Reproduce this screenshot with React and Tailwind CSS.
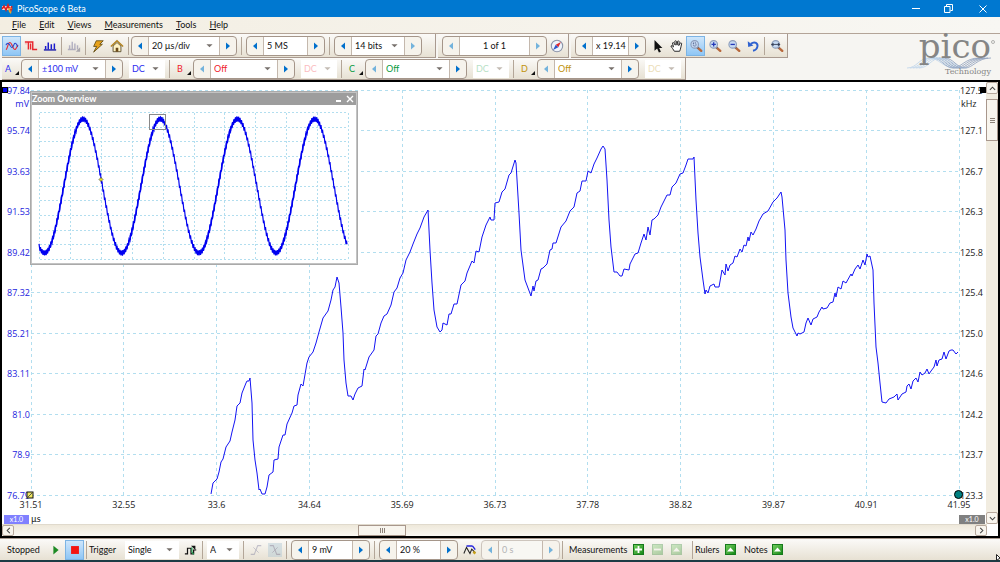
import React, { useState } from 'react';
import clsx from 'clsx';

const MENUS = ['File', 'Edit', 'Views', 'Measurements', 'Tools', 'Help'];

const VOLTS = ['97.84', '95.74', '93.63', '91.53', '89.42', '87.32', '85.21', '83.11', '81.0', '78.9', '76.79'];
const FREQS = ['127.5', '127.1', '126.7', '126.3', '125.8', '125.4', '125.0', '124.6', '124.2', '123.7', '123.3'];
const TIMES = ['31.51', '32.55', '33.6', '34.64', '35.69', '36.73', '37.78', '38.82', '39.87', '40.91', '41.95'];

const CHANNELS = [
    { name: 'A', range: '±100 mV', on: true, color: 'text-[#2b2bf0]' },
    { name: 'B', range: 'Off', on: false, color: 'text-[#f0202c]' },
    { name: 'C', range: 'Off', on: false, color: 'text-[#089a40]' },
    { name: 'D', range: 'Off', on: false, color: 'text-[#c0920c]' },
];

// Captured samples of channel A, in the units of the graph's view box
const TRACE =
    '211,494 213,483 217,479 219,472 221,462 223,459 226,447 230,441 232,432 235,420 237,406 240,403 242,393 246,383 247,381 249,381 250,378 ' +
    '252,403 253,440 255,460 257,473 259,490 260,489 262,494 265,494 267,487 269,475 273,472 274,460 278,459 279,447 283,435 285,435 287,424 ' +
    '292,413 294,406 297,405 298,395 301,384 303,386 307,363 309,357 313,352 316,343 319,332 323,318 328,311 331,300 333,290 335,287 337,277 ' +
    '339,283 341,307 343,333 344,360 346,383 348,396 351,396 353,400 355,394 358,388 362,386 364,369 365,370 369,357 374,350 376,336 378,334 ' +
    '381,323 384,316 387,314 391,305 394,292 397,288 400,278 403,273 406,260 410,252 413,244 417,234 420,228 424,217 428,210 ' +
    '430,250 432,283 434,310 437,327 440,332 442,330 443,323 447,325 449,314 451,314 454,304 457,304 461,285 465,281 467,273 472,261 474,263 ' +
    '476,251 479,252 482,237 486,225 490,217 491,220 494,220 495,203 499,202 502,192 505,189 509,175 511,173 515,160 516,163 ' +
    '519,213 521,250 525,280 528,288 531,296 533,286 534,291 536,281 538,280 541,269 543,268 547,264 550,250 552,249 553,243 556,243 561,227 ' +
    '566,221 570,211 574,207 577,193 580,191 582,181 586,181 588,171 591,173 594,164 597,158 601,149 603,146 605,149 ' +
    '607,180 609,220 611,247 614,272 617,272 620,276 622,276 624,269 629,270 630,264 635,254 638,253 641,243 644,234 646,240 648,227 650,235 ' +
    '652,220 654,219 658,215 661,207 667,195 670,195 672,187 676,183 680,174 683,173 686,165 688,159 693,159 694,157 ' +
    '696,200 698,233 700,257 703,280 705,294 706,290 708,293 710,286 714,284 715,287 719,287 722,270 725,275 726,264 728,271 730,265 733,263 ' +
    '735,256 737,257 740,249 742,252 744,245 746,246 748,237 749,241 751,232 753,235 756,229 759,221 763,214 768,211 773,202 777,198 781,192 ' +
    '782,197 785,230 786,260 788,293 791,317 793,328 797,336 798,333 800,334 804,332 806,323 808,318 811,325 813,319 817,317 819,312 822,307 ' +
    '823,309 827,308 830,303 833,302 835,293 836,297 838,287 841,289 843,281 846,283 851,274 852,276 855,269 858,265 860,269 863,260 865,265 ' +
    '867,254 868,257 870,256 873,270 874,303 876,347 878,363 880,383 882,402 886,403 889,399 894,397 897,394 898,400 902,394 906,392 907,386 ' +
    '909,384 911,389 913,381 916,378 918,382 920,372 922,375 925,373 927,369 929,374 931,371 934,367 936,360 937,366 939,360 942,359 944,352 ' +
    '946,359 949,351 951,350 953,350 956,354 958,352';

const PERIOD = 77.2;

// Sine carrier with a fast sawtooth on top, as seen in the overview
const wave = (from, to, ripple) => {
    const points = [];
    for (let x = from; x <= to; x += 0.5) {
        const carrier = 74 + 67 * Math.cos(((x - 5.5) * 2 * Math.PI) / PERIOD);
        const saw = ((x % 1.5) - 0.5) * ripple;
        points.push(`${x},${(carrier + saw).toFixed(1)}`);
    }
    return points.join(' ');
};

// The rising halves are drawn heavier than the falling ones
const RISES = [0, 1, 2, 3].map(i => {
    const trough = 6 + i * PERIOD;
    return wave(Math.round(trough), Math.round(trough + PERIOD / 2), 2);
});

const Triangle = ({ dir, className }) => (
    <svg viewBox="0 0 8 8" className={className} fill="currentColor" aria-hidden="true">
        {dir === 'left' && <path d="M6 0.5v7L2 4z" />}
        {dir === 'right' && <path d="M2 0.5v7L6 4z" />}
        {dir === 'down' && <path d="M0.5 2.5h7L4 6z" />}
    </svg>
);

const Separator = ({ wide }) => (
    <span
        className={clsx(
            'h-[18px] shrink-0 border-l border-[#b3a698] bg-white',
            wide ? 'mx-1 w-px' : 'mx-0.5 w-px'
        )}
    />
);

const Dropdown = ({ label, value, className, disabled }) => (
    <span className={clsx('relative flex h-[18px] shrink-0 items-center bg-white', className)}>
        <select
            aria-label={label}
            disabled={disabled}
            className="h-full w-full appearance-none bg-transparent pl-[3px] outline-none disabled:opacity-30"
        >
            <option>{value}</option>
        </select>
        <Triangle
            dir="down"
            className={clsx(
                'pointer-events-none absolute right-1.5 size-[7px]',
                disabled ? 'text-[#c4bcb4]' : 'text-[#77716c]'
            )}
        />
    </span>
);

// Value box with previous / next buttons on its sides
const Spinner = ({ label, width, value, select, center, prevOff, nextOff, off, className }) => (
    <div
        className={clsx(
            'flex h-5 shrink-0 items-stretch overflow-hidden rounded border bg-[#f6f3ec]',
            off ? 'border-[#cdc5bd] text-[#b4b4b4]' : 'border-[#a5968a]',
            className
        )}
    >
        <button
            aria-label={`Previous ${label}`}
            className="flex w-[17px] items-center justify-center border-r border-[#c4b8ad]"
        >
            <Triangle dir="left" className={clsx('size-2', prevOff || off ? 'text-[#74b3dc]' : 'text-[#0070cc]')} />
        </button>
        {select ? (
            <Dropdown label={label} value={value} className={width} />
        ) : (
            <input
                aria-label={label}
                defaultValue={value}
                disabled={off}
                className={clsx(
                    'outline-none',
                    off ? 'bg-[#f8f7f3]' : 'bg-white',
                    center ? 'text-center' : 'pl-[3px]',
                    width
                )}
            />
        )}
        <button
            aria-label={`Next ${label}`}
            className="flex w-[17px] items-center justify-center border-l border-[#c4b8ad]"
        >
            <Triangle dir="right" className={clsx('size-2', nextOff || off ? 'text-[#74b3dc]' : 'text-[#0070cc]')} />
        </button>
    </div>
);

const ToolButton = ({ label, active, faded, children }) => (
    <button
        aria-label={label}
        className={clsx(
            'flex h-5 w-[19px] shrink-0 items-center justify-center',
            active && 'border border-[#7db4e4] bg-linear-to-b from-[#cfe6fb] to-[#8ec6f5]',
            faded && 'opacity-40'
        )}
    >
        <svg viewBox="0 0 16 16" className="size-[14px] shrink-0" fill="none" aria-hidden="true">
            {children}
        </svg>
    </button>
);

const Magnifier = ({ children }) => (
    <>
        <path d="M9.5 9.5L14 13.500" stroke="#b8683c" strokeWidth="2.800" strokeLinecap="round" />
        <path d="M9 9l1.500 1.500" stroke="#5c6680" strokeWidth="2" />
        <circle cx="6.500" cy="6.200" r="4.300" fill="#c6d9f2" stroke="#8c9cba" strokeWidth="1.300" />
        {children}
    </>
);

const Strip = ({ className, children }) => (
    <div
        className={clsx(
            'flex shrink-0 items-center border-r border-b border-[#a99a90] bg-linear-to-b from-[#fbfaf8] to-[#e7e1d3]',
            className
        )}
    >
        {children}
    </div>
);

const GreenButton = ({ label, faded, children }) => (
    <button
        aria-label={label}
        className={clsx(
            'mr-2 flex size-[11px] shrink-0 items-center justify-center border border-[#167a1c] bg-linear-to-br from-[#6fce5c] to-[#0c8a14]',
            faded && 'opacity-30'
        )}
    >
        <svg viewBox="0 0 9 9" className="size-[9px] shrink-0" aria-hidden="true">
            {children}
        </svg>
    </button>
);

const TitleBar = () => (
    <header className="flex h-[17px] shrink-0 items-center bg-[#0078d0] text-white">
        <svg viewBox="0 0 13 13" className="ml-px size-[13px]" fill="none" aria-hidden="true">
            <path d="M1 4h10v4H1z" fill="#f7d9dc" />
            <path d="M1 7l2-3 2 4 2-5 2 5 2-4" stroke="#e02020" strokeWidth="1.6" />
            <path d="M7 6h4l-1 6-2-2z" fill="#e8a628" />
            <path d="M9 7l3-1-2 4z" fill="#d9262e" />
        </svg>
        <h1 className="ml-[3px]">PicoScope 6 Beta</h1>
        <div className="ml-auto flex items-center">
            <button aria-label="Minimize" className="flex h-4 w-[33px] items-center justify-center">
                <span className="h-px w-2 bg-white" />
            </button>
            <button aria-label="Restore" className="flex h-4 w-[33px] items-center justify-center">
                <svg viewBox="0 0 9 9" className="size-[9px]" fill="none" stroke="white" aria-hidden="true">
                    <path d="M.5 2.5h5.500v6H.5zM2.500 2.500V.5h6v6H6.500" />
                </svg>
            </button>
            <button aria-label="Close" className="flex h-4 w-[35px] items-center justify-center">
                <svg viewBox="0 0 8 8" className="size-2" fill="none" stroke="white" aria-hidden="true">
                    <path d="M.5.5l7 7M7.500.5l-7 7" />
                </svg>
            </button>
        </div>
    </header>
);

const MenuBar = () => (
    <nav className="flex h-[17px] shrink-0 items-center gap-[13px] border-b border-[#b3a498] bg-linear-to-r from-[#f3eee2] to-[#f8f7f3] pl-3">
        {MENUS.map(menu => (
            <button key={menu}>
                <span className="underline">{menu[0]}</span>
                {menu.slice(1)}
            </button>
        ))}
    </nav>
);

const Logo = () => (
    <div className="relative mr-[5px] h-[46px] w-[88px] shrink-0 text-[#858585]">
        <svg viewBox="0 0 88 46" className="absolute inset-0" fill="none" aria-hidden="true">
            {[0, 1, 2, 3, 4].map(i => (
                <g key={i} transform={`translate(${i * 3} 0)`}>
                    <path d="M0 34C10 34 12 24 22 24s14 10 26 10" stroke="#bcd3ea" strokeWidth="0.8" />
                    <path d="M26 24c8 0 12 10 20 10s12-10 26-10" stroke="#8a9cba" strokeWidth="0.8" />
                </g>
            ))}
            <circle cx="86" cy="8" r="1.500" stroke="currentColor" strokeWidth="0.6" />
        </svg>
        <div className="relative pr-1 text-right font-['DejaVu_Serif',serif] text-[34px] leading-[24px]">pico</div>
        <div className="absolute right-1 bottom-0.5 font-['DejaVu_Serif',serif] text-[8px]">Technology</div>
    </div>
);

const MainToolbar = () => (
    <div className="flex h-6 shrink-0 gap-0.5">
        <Strip className="w-[434px]">
            <ToolButton label="Scope mode" active>
                <path d="M1 12C3 12 3 4 5.500 4S9 12 11 12s2.500-4 4-5" stroke="#e8333a" strokeWidth="1.400" />
                <path d="M1 7c1.500-3 3-3 4.500 0s3 4 4.500 0 3-2 4.500 2" stroke="#2540c8" strokeWidth="1.200" />
            </ToolButton>
            <ToolButton label="Persistence mode">
                <path d="M1 3.500h4V12M4 3.500h6V12h5M7.500 12V5" stroke="#e8262e" strokeWidth="1.600" />
                <path d="M1 5.500h3" stroke="#f5a0a0" />
            </ToolButton>
            <ToolButton label="Spectrum mode">
                <path d="M1 12.500h14" stroke="#1a1aa8" strokeWidth="1.600" />
                <path d="M3 12V8M6 12V4M9.500 12V6M13 12V5" stroke="#1c1ccc" strokeWidth="1.700" />
            </ToolButton>
            <Separator />
            <ToolButton label="Advanced mode" faded>
                <path d="M1 12h9M3 12V7M6 12V3M9 12V5M12 12V7" stroke="#55558c" strokeWidth="1.600" />
                <path d="M10 14.500h5v-5z" fill="#444460" />
            </ToolButton>
            <Separator />
            <ToolButton label="Auto setup">
                <path d="M6 2h8l-4 4h3l-10 9 3.500-6.500H3z" fill="#e8a21c" stroke="#57420c" strokeWidth="0.9" />
            </ToolButton>
            <ToolButton label="Home">
                <path d="M3.500 8v6.500h9V8L8 4z" fill="#fff3c4" stroke="#55482a" />
                <path d="M1 8.500l7-6.500 7 6.500" stroke="#b0801c" strokeWidth="1.600" />
                <path d="M6.500 14.500V10h3v4.500z" fill="#6b4a18" />
            </ToolButton>
            <Separator />
            <Spinner label="time base" select value="20 µs/div" width="w-[70px]" />
            <Separator wide />
            <Spinner label="samples" value="5 MS" width="w-[43px]" />
            <Separator wide />
            <Spinner label="resolution" select value="14 bits" width="w-[52px]" nextOff />
        </Strip>
        <Strip className="w-[131px] pl-1">
            <Spinner label="buffer" value="1 of 1" width="w-[69px]" center prevOff nextOff />
            <ToolButton label="Buffer navigator">
                <circle cx="8" cy="8" r="6.500" fill="#eef3fb" stroke="#8a93a8" strokeWidth="1.200" />
                <path d="M12.500 3.500L9.500 9.500 6.500 6.500z" fill="#e0282e" />
                <path d="M3.500 12.500L9.500 9.500 6.500 6.500z" fill="#2f55c8" />
            </ToolButton>
        </Strip>
        <Strip className="w-[217px] pl-1">
            <Spinner label="zoom factor" value="x 19.14" width="w-[35px]" className="mr-0.5" />
            <ToolButton label="Selection tool">
                <path d="M4 1v12.500l3-2.700L9 15.500l2.300-1-2-4.300H13z" fill="#111" />
            </ToolButton>
            <ToolButton label="Hand tool">
                <path
                    d="M5 14c-1-2-3-4-4-6 .8-1 2 0 3 1L2.800 4.500c.8-1 1.700-.3 2 .5L6 7l-.5-4.500c1-.9 1.800-.3 2 .5L8 7l.8-4.500c1-.7 1.800 0 1.700 1L10 7.500l1.800-3c1-.5 1.700.3 1.400 1.200C12.500 9 12 12 11 14z"
                    fill="#fff"
                    stroke="#222"
                    strokeWidth="1.100"
                />
            </ToolButton>
            <ToolButton label="Marquee zoom" active>
                <Magnifier>
                    <path d="M5 4.500h3v3.500H5z" stroke="#3b4a78" strokeDasharray="1 1" />
                </Magnifier>
            </ToolButton>
            <ToolButton label="Zoom in">
                <Magnifier>
                    <path d="M4 6.200h5M6.500 3.700v5" stroke="#2438b8" strokeWidth="1.500" />
                </Magnifier>
            </ToolButton>
            <ToolButton label="Zoom out">
                <Magnifier>
                    <path d="M4 6.200h5" stroke="#2438b8" strokeWidth="1.500" />
                </Magnifier>
            </ToolButton>
            <ToolButton label="Undo zoom">
                <path d="M5.500 5.500C10 2 14 5 13 9c-.6 2.500-2.500 4-5 4.500" stroke="#2f62d0" strokeWidth="2.200" />
                <path d="M2 2.500l.5 6.500 6-1.500z" fill="#2f62d0" />
            </ToolButton>
            <Separator />
            <ToolButton label="Zoom to full view">
                <Magnifier>
                    <path d="M1 6.200l3-2v4zM12 6.200l-3-2v4z" fill="#333d55" />
                    <path d="M3 6.200h7" stroke="#333d55" />
                </Magnifier>
            </ToolButton>
        </Strip>
    </div>
);

const ChannelBar = () => (
    <div className="flex h-[22px] shrink-0">
        <Strip className="pr-1">
            {CHANNELS.map((ch, i) => (
                <div key={ch.name} className={clsx('flex items-center', ch.color)}>
                    <button className="relative h-5 w-[19px] shrink-0 pl-[3px] text-left">
                        {ch.name}
                        <svg viewBox="0 0 4 4" className="absolute right-0.5 bottom-1 size-1" aria-hidden="true">
                            <path d="M4 0v4H0z" fill="#111" />
                        </svg>
                    </button>
                    <Spinner
                        label={`channel ${ch.name} range`}
                        select
                        value={ch.range}
                        width="w-[66px]"
                        prevOff={!ch.on}
                    />
                    <span className="w-1.5" />
                    <Dropdown label={`Channel ${ch.name} coupling`} value="DC" className="w-9" disabled={!ch.on} />
                    {i < CHANNELS.length - 1 && <Separator wide />}
                </div>
            ))}
        </Strip>
    </div>
);

const Overview = () => (
    <section className="absolute top-[9px] left-7 w-[328px] border-2 border-[#c3c3c3] bg-white outline-1 -outline-offset-1 outline-[#aaa]">
        <div className="flex h-3 items-center bg-[#9d9d9d] text-white">
            <h2 className="text-[9px] font-bold">Zoom Overview</h2>
            <button aria-label="Minimize overview" className="ml-auto flex h-3 w-3 items-end justify-center pb-[3px]">
                <span className="h-0.5 w-[5px] bg-white" />
            </button>
            <button aria-label="Close overview" className="flex h-3 w-3 items-center justify-center">
                <svg viewBox="0 0 8 8" className="size-2" stroke="white" strokeWidth="1.400" aria-hidden="true">
                    <path d="M1 1l6 6M7 1L1 7" />
                </svg>
            </button>
        </div>
        <svg viewBox="-7 -7 324 158" className="block w-full" fill="none" aria-label="Overview waveform">
            {TIMES.map((t, i) => (
                <g key={t} stroke="#b2deef" strokeDasharray="2 2" shapeRendering="crispEdges">
                    <path d={`M${i * 30.9 + 0.5} 0.500V147`} />
                    <path d={`M0.500 ${i * 14.7 + 0.5}H309`} />
                </g>
            ))}
            <polyline points={wave(0, 308, 5)} stroke="#0000f0" strokeWidth="1.200" />
            {RISES.map(points => (
                <polyline key={points} points={points} stroke="#0000f0" strokeWidth="1.600" />
            ))}
            <rect x="110.500" y="2.500" width="16" height="15" stroke="#8a8a8a" />
            <path d="M62 65.500l2 2-2 2-2-2z" fill="#e8e020" stroke="#333" strokeWidth="0.6" />
        </svg>
    </section>
);

const Graph = () => (
    <div className="relative flex min-w-0 flex-1 flex-col pt-2">
        <div className="flex min-h-0 flex-1 font-['Open_Sans','Noto_Sans',sans-serif] leading-[9px]">
            <div className="relative flex w-[29px] shrink-0 flex-col justify-between pr-px text-[#2222dd]">
                {VOLTS.map(v => (
                    <span key={v} className="flex h-0 items-center justify-end">{v}</span>
                ))}
                <span className="absolute top-[9px] right-0.5">mV</span>
                <span className="absolute -top-[3px] left-0 size-1.5 border border-black bg-[#0000f0]" />
            </div>
            <svg
                viewBox="31 90 928 405"
                preserveAspectRatio="none"
                className="block h-full min-w-0 flex-1 overflow-visible"
                fill="none"
                aria-label="Channel A waveform"
            >
                {TIMES.map((t, i) => (
                    <g key={t} stroke="#b2deef" strokeDasharray="3 3" shapeRendering="crispEdges">
                        <path d={`M${31 + i * 92.8} 90V495`} />
                        <path d={`M31 ${90 + i * 40.5}H959`} />
                    </g>
                ))}
                <polyline points={TRACE} stroke="#1414f4" strokeWidth="1" vectorEffect="non-scaling-stroke" />
            </svg>
            <div className="relative flex w-[27px] shrink-0 flex-col justify-between pl-px text-[#222]">
                {FREQS.map(f => (
                    <span key={f} className="flex h-0 items-center">{f}</span>
                ))}
                <span className="absolute top-[9px] left-0.5">kHz</span>
                <span className="absolute -top-[3px] right-0 size-1.5 bg-black" />
                <span className="absolute -bottom-1 -left-[5px] size-[9px] rounded-full border border-black bg-[#008080]" />
            </div>
        </div>
        <div className="mr-[27px] ml-[29px] flex h-[19px] shrink-0 items-center justify-between font-['Open_Sans','Noto_Sans',sans-serif] leading-[9px] text-[#222]">
            {TIMES.map(t => (
                <span key={t} className="flex w-0 justify-center">{t}</span>
            ))}
        </div>
        <div className="flex h-2.5 shrink-0 items-center pr-px pl-0.5">
            <button className="h-[9px] w-[25px] bg-[#8080ff] text-[7px] leading-[9px] text-white">x1.0</button>
            <span className="ml-0.5">µs</span>
            <button className="ml-auto h-[9px] w-[26px] bg-[#808080] text-[7px] leading-[9px] text-white">x1.0</button>
        </div>
        <svg viewBox="0 0 8 8" className="absolute bottom-[25px] left-6 size-2" fill="none" aria-hidden="true">
            <rect x="1" y="1" width="6" height="6" fill="#f0e860" stroke="#111" />
            <path d="M2 6l4-4" stroke="#555" />
        </svg>
        <Overview />
    </div>
);

const ArrowButton = ({ label, className, d }) => (
    <button
        aria-label={label}
        className={clsx(
            'flex shrink-0 items-center justify-center rounded-xs border border-[#b7a89c] bg-[#f8f5ee]',
            className
        )}
    >
        <svg viewBox="0 0 8 8" className="size-[7px]" fill="none" stroke="#444" strokeWidth="1.200" aria-hidden="true">
            <path d={d} />
        </svg>
    </button>
);

const Scope = () => (
    <main className="flex min-h-0 flex-1 flex-col border-2 border-black bg-white">
        <div className="flex min-h-0 flex-1">
            <Graph />
            <div className="flex w-3 shrink-0 flex-col bg-[#f1ece0]">
                <ArrowButton label="Scroll up" className="h-3" d="M1 5.500l3-3 3 3" />
                <div className="mt-[5px] flex h-[42px] flex-col items-center justify-center gap-px border border-[#a8978c] bg-[#f8f5ee]">
                    <span className="h-px w-[5px] bg-[#8c8279]" />
                    <span className="h-px w-[5px] bg-[#8c8279]" />
                    <span className="h-px w-[5px] bg-[#8c8279]" />
                </div>
                <ArrowButton label="Scroll down" className="mt-auto h-3" d="M1 2.500l3 3 3-3" />
            </div>
        </div>
        <div className="flex h-3 shrink-0 pr-[11px]">
            <div className="flex min-w-0 flex-1 border-t border-[#e0dacd] bg-linear-to-b from-[#eee8da] to-[#faf8f3]">
                <ArrowButton label="Scroll left" className="w-3" d="M5.500 1l-3 3 3 3" />
                <div className="ml-[344px] flex w-12 items-center justify-center gap-px border border-[#a8978c] bg-[#f8f5ee]">
                    <span className="h-[5px] w-px bg-[#8c8279]" />
                    <span className="h-[5px] w-px bg-[#8c8279]" />
                    <span className="h-[5px] w-px bg-[#8c8279]" />
                </div>
                <ArrowButton label="Scroll right" className="ml-auto w-3" d="M2.500 1l3 3-3 3" />
            </div>
        </div>
    </main>
);

const TriggerBar = () => {
    const [running, setRunning] = useState(false);

    return (
        <footer className="flex h-[22px] shrink-0 items-center border-t border-[#a99a90] bg-linear-to-b from-[#fbfaf8] to-[#e7e1d3] pl-0.5">
            <span className="w-11 shrink-0 pl-[5px]">{running ? 'Running' : 'Stopped'}</span>
            <div className="flex" onClick={() => setRunning(false)}>
                <ToolButton label="Start capture">
                    <path d="M5 3v10l6-5z" fill="#1d8a24" />
                </ToolButton>
                <ToolButton label="Stop capture" active>
                    <path d="M3.500 3.500h9v9h-9z" fill="#f41410" />
                </ToolButton>
            </div>
            <Separator />
            <label htmlFor="trigger-mode" className="w-9 shrink-0">Trigger</label>
            <span className="relative flex h-[18px] w-[54px] shrink-0 items-center bg-white">
                <select id="trigger-mode" className="h-full w-full appearance-none bg-transparent pl-[3px] outline-none">
                    <option>Single</option>
                </select>
                <Triangle dir="down" className="pointer-events-none absolute right-1.5 size-[7px] text-[#77716c]" />
            </span>
            <span className="w-0.5" />
            <ToolButton label="Advanced triggers">
                <path d="M1 12.500h3V6h4v6.500h3V8h3" stroke="#111" strokeWidth="1.400" />
                <path d="M8 3l5 0v5z" fill="#111" />
                <path d="M9 5v5l2 3" stroke="#1f9a50" strokeWidth="1.400" />
            </ToolButton>
            <Separator />
            <Dropdown label="Trigger source" value="A" className="ml-0.5 w-8" />
            <span className="w-0.5" />
            <Separator />
            <ToolButton label="Rising edge" faded>
                <path d="M2 13h4L10 3h4" stroke="#777799" strokeWidth="1.200" />
                <path d="M5 5l6 6" stroke="#777799" />
            </ToolButton>
            <ToolButton label="Falling edge" faded>
                <path d="M0 0h16v16H0z" fill="#a8c4d4" />
                <path d="M2 3h4l4 10h4" stroke="#55557a" strokeWidth="1.200" />
                <path d="M5 11l6-6" stroke="#55557a" />
            </ToolButton>
            <Separator />
            <Spinner label="threshold" value="9 mV" width="w-[43px]" className="ml-0.5" />
            <Separator wide />
            <Spinner label="pre-trigger" value="20 %" width="w-[43px]" />
            <span className="w-0.5" />
            <ToolButton label="Trigger delay">
                <path d="M1 12l3-7 4 7 2-5 4 4" stroke="#222" strokeWidth="1.200" />
                <path d="M4 3.500h7M11 3.500l3 4" stroke="#2222dd" strokeWidth="1.600" />
                <path d="M12 12l2-2" stroke="#c8a018" strokeWidth="3" />
            </ToolButton>
            <Spinner label="delay" value="0 s" width="w-[43px]" off className="ml-0.5" />
            <Separator />
            <span className="ml-1 w-[64px] shrink-0">Measurements</span>
            <GreenButton label="Add measurement">
                <path d="M4.500 1v7M1 4.500h7" stroke="white" strokeWidth="1.800" />
            </GreenButton>
            <GreenButton label="Delete measurement" faded>
                <path d="M1 4.500h7" stroke="white" strokeWidth="1.800" />
            </GreenButton>
            <GreenButton label="Edit measurement" faded>
                <path d="M1 6.500h7L4.500 2.500z" fill="white" />
            </GreenButton>
            <Separator />
            <span className="w-[30px] shrink-0">Rulers</span>
            <GreenButton label="Show rulers">
                <path d="M1 6.500h7L4.500 2.500z" fill="white" />
            </GreenButton>
            <span className="w-7 shrink-0">Notes</span>
            <GreenButton label="Show notes">
                <path d="M1 6.500h7L4.500 2.500z" fill="white" />
            </GreenButton>
        </footer>
    );
};

const App = () => (
    <div className="relative flex h-screen flex-col overflow-hidden bg-[#f6f5f2] font-[Lato,'Open_Sans',sans-serif] text-[9px] leading-[12px] text-[#111]">
        <TitleBar />
        <MenuBar />
        <div className="flex shrink-0 justify-between pl-0.5">
            <div>
                <MainToolbar />
                <ChannelBar />
            </div>
            <Logo />
        </div>
        <Scope />
        <TriggerBar />
        <div className="h-0.5 shrink-0 bg-[#1d3b45]" />
        <svg viewBox="0 0 4 8" className="absolute right-0 bottom-0 h-2 w-1" aria-hidden="true">
            <path d="M.5.5v6l3.500-2.500z" fill="white" stroke="#222" />
        </svg>
    </div>
);

export default App;
